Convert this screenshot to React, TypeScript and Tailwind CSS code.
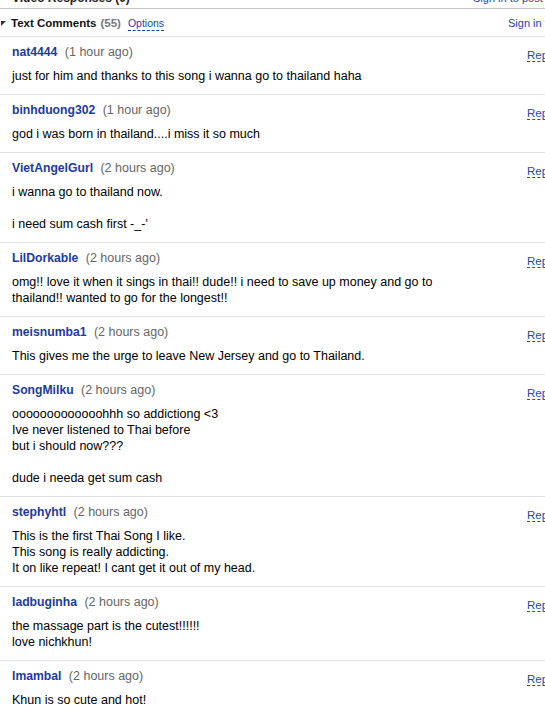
import React from 'react';

type Comment = {
  user: string;
  time: string;
  body: string;
};

const comments: Comment[] = [
  { user: 'nat4444', time: '(1 hour ago)', body: 'just for him and thanks to this song i wanna go to thailand haha' },
  { user: 'binhduong302', time: '(1 hour ago)', body: 'god i was born in thailand....i miss it so much' },
  { user: 'VietAngelGurl', time: '(2 hours ago)', body: "i wanna go to thailand now.\n\ni need sum cash first -_-'" },
  {
    user: 'LilDorkable',
    time: '(2 hours ago)',
    body: 'omg!! love it when it sings in thai!! dude!! i need to save up money and go to\nthailand!! wanted to go for the longest!!',
  },
  { user: 'meisnumba1', time: '(2 hours ago)', body: 'This gives me the urge to leave New Jersey and go to Thailand.' },
  {
    user: 'SongMilku',
    time: '(2 hours ago)',
    body: 'ooooooooooooohhh so addictiong <3\nIve never listened to Thai before\nbut i should now???\n\ndude i needa get sum cash',
  },
  {
    user: 'stephyhtl',
    time: '(2 hours ago)',
    body: 'This is the first Thai Song I like.\nThis song is really addicting.\nIt on like repeat! I cant get it out of my head.',
  },
  { user: 'ladbuginha', time: '(2 hours ago)', body: 'the massage part is the cutest!!!!!!\nlove nichkhun!' },
  { user: 'lmambal', time: '(2 hours ago)', body: 'Khun is so cute and hot!' },
];

function CommentRow({ c }: { c: Comment }) {
  return (
    <div className="flex border-b border-[#e2e2e2] pt-[7px] pb-[10px]">
      <div className="flex-1 pl-3">
        <div className="text-[12.2px] leading-4 whitespace-nowrap">
          <a className="font-bold text-[#1c3b9c]">{c.user}</a>{' '}
          <span className="ml-1 text-[12.5px] text-[#666]">{c.time}</span>
        </div>
        <div className="mt-2 text-[12.5px] leading-4 text-black whitespace-pre-line">{c.body}</div>
      </div>
      <div className="w-[38px] shrink-0 pt-[3px] text-[11.5px] leading-4">
        <a className="text-[#2a47b0] border-b border-dashed border-[#2a47b0]">Reply</a>
      </div>
    </div>
  );
}

export default function App() {
  return (
    <div className="w-[545px] h-[713px] overflow-hidden bg-white" style={{ fontFamily: '"Liberation Sans", Arial, sans-serif' }}>
      <div className="w-[565px]">
        {/* cut-off section above */}
        <div className="h-[9px] overflow-hidden border-b border-[#c4c4c4]">
          <div className="-mt-[10px] flex text-[12px] leading-4">
            <div className="flex-1 pl-3 font-bold text-[#222]">Video Responses (0)</div>
            <div className="w-[92px] shrink-0 text-[11px] text-[#1c3fae] whitespace-nowrap">Sign in to post</div>
          </div>
        </div>

        {/* Text comments header */}
        <div className="flex border-b border-[#e2e2e2] pt-[6px] pb-[5px]">
          <div className="flex flex-1 items-center">
            <svg width="11" height="16" viewBox="0 0 11 16" className="shrink-0">
              <polygon points="1,6 6,6 1,11" fill="#333" />
            </svg>
            <span className="text-[11.5px] leading-4 font-bold text-[#111]">Text Comments</span>
            <span className="ml-1 text-[11.5px] leading-4 font-bold text-[#777]">(55)</span>
            <a className="ml-[7px] text-[10.5px] leading-[14px] text-[#1c3fae] border-b border-dashed border-[#1c3fae]">Options</a>
          </div>
          <div className="w-[57px] shrink-0 text-[11px] leading-4 text-[#1c3fae] whitespace-nowrap overflow-hidden">Sign in to post</div>
        </div>

        {comments.map((c) => (
          <CommentRow key={c.user} c={c} />
        ))}
      </div>
    </div>
  );
}
